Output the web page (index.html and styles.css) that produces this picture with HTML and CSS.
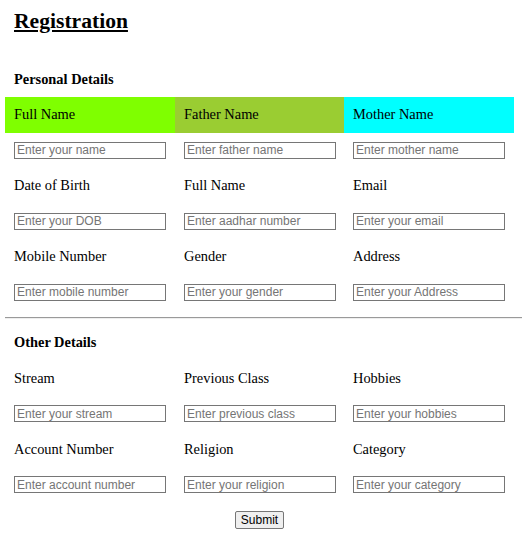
FILE: index.html
```html
<!DOCTYPE html>
<html>
<head>
<meta charset="utf-8">
<title>Registration</title>
<link rel="stylesheet" href="styles.css">
</head>
<body>
<h2 class="title">Registration</h2>
<form>
<table class="form-table first">
  <colgroup><col class="c1"><col class="c2"><col class="c3"></colgroup>
  <tr><th colspan="3" class="section">Personal Details</th></tr>
  <tr class="head">
    <td class="green">Full Name</td>
    <td class="olive">Father Name</td>
    <td class="aqua">Mother Name</td>
  </tr>
  <tr>
    <td><input type="text" placeholder="Enter your name"></td>
    <td><input type="text" placeholder="Enter father name"></td>
    <td><input type="text" placeholder="Enter mother name"></td>
  </tr>
  <tr>
    <td>Date of Birth</td>
    <td>Full Name</td>
    <td>Email</td>
  </tr>
  <tr>
    <td><input type="text" placeholder="Enter your DOB"></td>
    <td><input type="text" placeholder="Enter aadhar number"></td>
    <td><input type="text" placeholder="Enter your email"></td>
  </tr>
  <tr>
    <td>Mobile Number</td>
    <td>Gender</td>
    <td>Address</td>
  </tr>
  <tr>
    <td><input type="text" placeholder="Enter mobile number"></td>
    <td><input type="text" placeholder="Enter your gender"></td>
    <td><input type="text" placeholder="Enter your Address"></td>
  </tr>
</table>
<hr class="divider">
<table class="form-table">
  <colgroup><col class="c1"><col class="c2"><col class="c3"></colgroup>
  <tr><th colspan="3" class="section">Other Details</th></tr>
  <tr>
    <td>Stream</td>
    <td>Previous Class</td>
    <td>Hobbies</td>
  </tr>
  <tr>
    <td><input type="text" placeholder="Enter your stream"></td>
    <td><input type="text" placeholder="Enter previous class"></td>
    <td><input type="text" placeholder="Enter your hobbies"></td>
  </tr>
  <tr>
    <td>Account Number</td>
    <td>Religion</td>
    <td>Category</td>
  </tr>
  <tr>
    <td><input type="text" placeholder="Enter account number"></td>
    <td><input type="text" placeholder="Enter your religion"></td>
    <td><input type="text" placeholder="Enter your category"></td>
  </tr>
  <tr>
    <td colspan="3" class="submit-cell"><button type="submit" class="submit">Submit</button></td>
  </tr>
</table>
</form>
</body>
</html>
```
FILE: styles.css
```css
html, body {
  background: #ffffff;
}
body {
  margin: 0 5px;
  font-family: "Liberation Serif", "Times New Roman", serif;
  font-size: 14.4px;
  color: #000000;
}
.title {
  font-size: 21.6px;
  line-height: 25px;
  font-weight: bold;
  text-decoration: underline;
  margin: 9px 0 0 9px;
}
form {
  margin: 0;
}
.form-table {
  border-collapse: collapse;
  table-layout: fixed;
  width: 509px;
}
.form-table.first {
  margin-top: 27.5px;
}
.c1 { width: 170px; }
.c2 { width: 169px; }
.c3 { width: 170px; }
.form-table th,
.form-table td {
  height: 35.5px;
  padding: 0 9px;
  vertical-align: middle;
  text-align: left;
  box-sizing: border-box;
}
.section {
  font-weight: bold;
}
.green { background: #7fff00; }
.olive { background: #9acd32; }
.aqua { background: #00ffff; }
.form-table input {
  display: block;
  box-sizing: border-box;
  width: 152px;
  height: 17px;
  margin: 0;
  padding: 0 2px;
  border: 1px solid #767676;
  border-radius: 0;
  font-family: "Liberation Sans", Arial, sans-serif;
  font-size: 12px;
  color: #000;
  background: #fff;
}
.form-table input::placeholder {
  color: #757575;
}
.divider {
  margin: 7px 0 6px;
  border: 0;
  border-top: 1px solid #9a9a9a;
  border-bottom: 1px solid #eeeeee;
  height: 0;
}
.submit-cell {
  text-align: center !important;
}
.submit {
  box-sizing: border-box;
  height: 18px;
  padding: 0 5px;
  border: 1px solid #767676;
  border-radius: 2px;
  background: #efefef;
  font-family: "Liberation Sans", Arial, sans-serif;
  font-size: 12px;
  color: #000;
  line-height: 14px;
}
```
